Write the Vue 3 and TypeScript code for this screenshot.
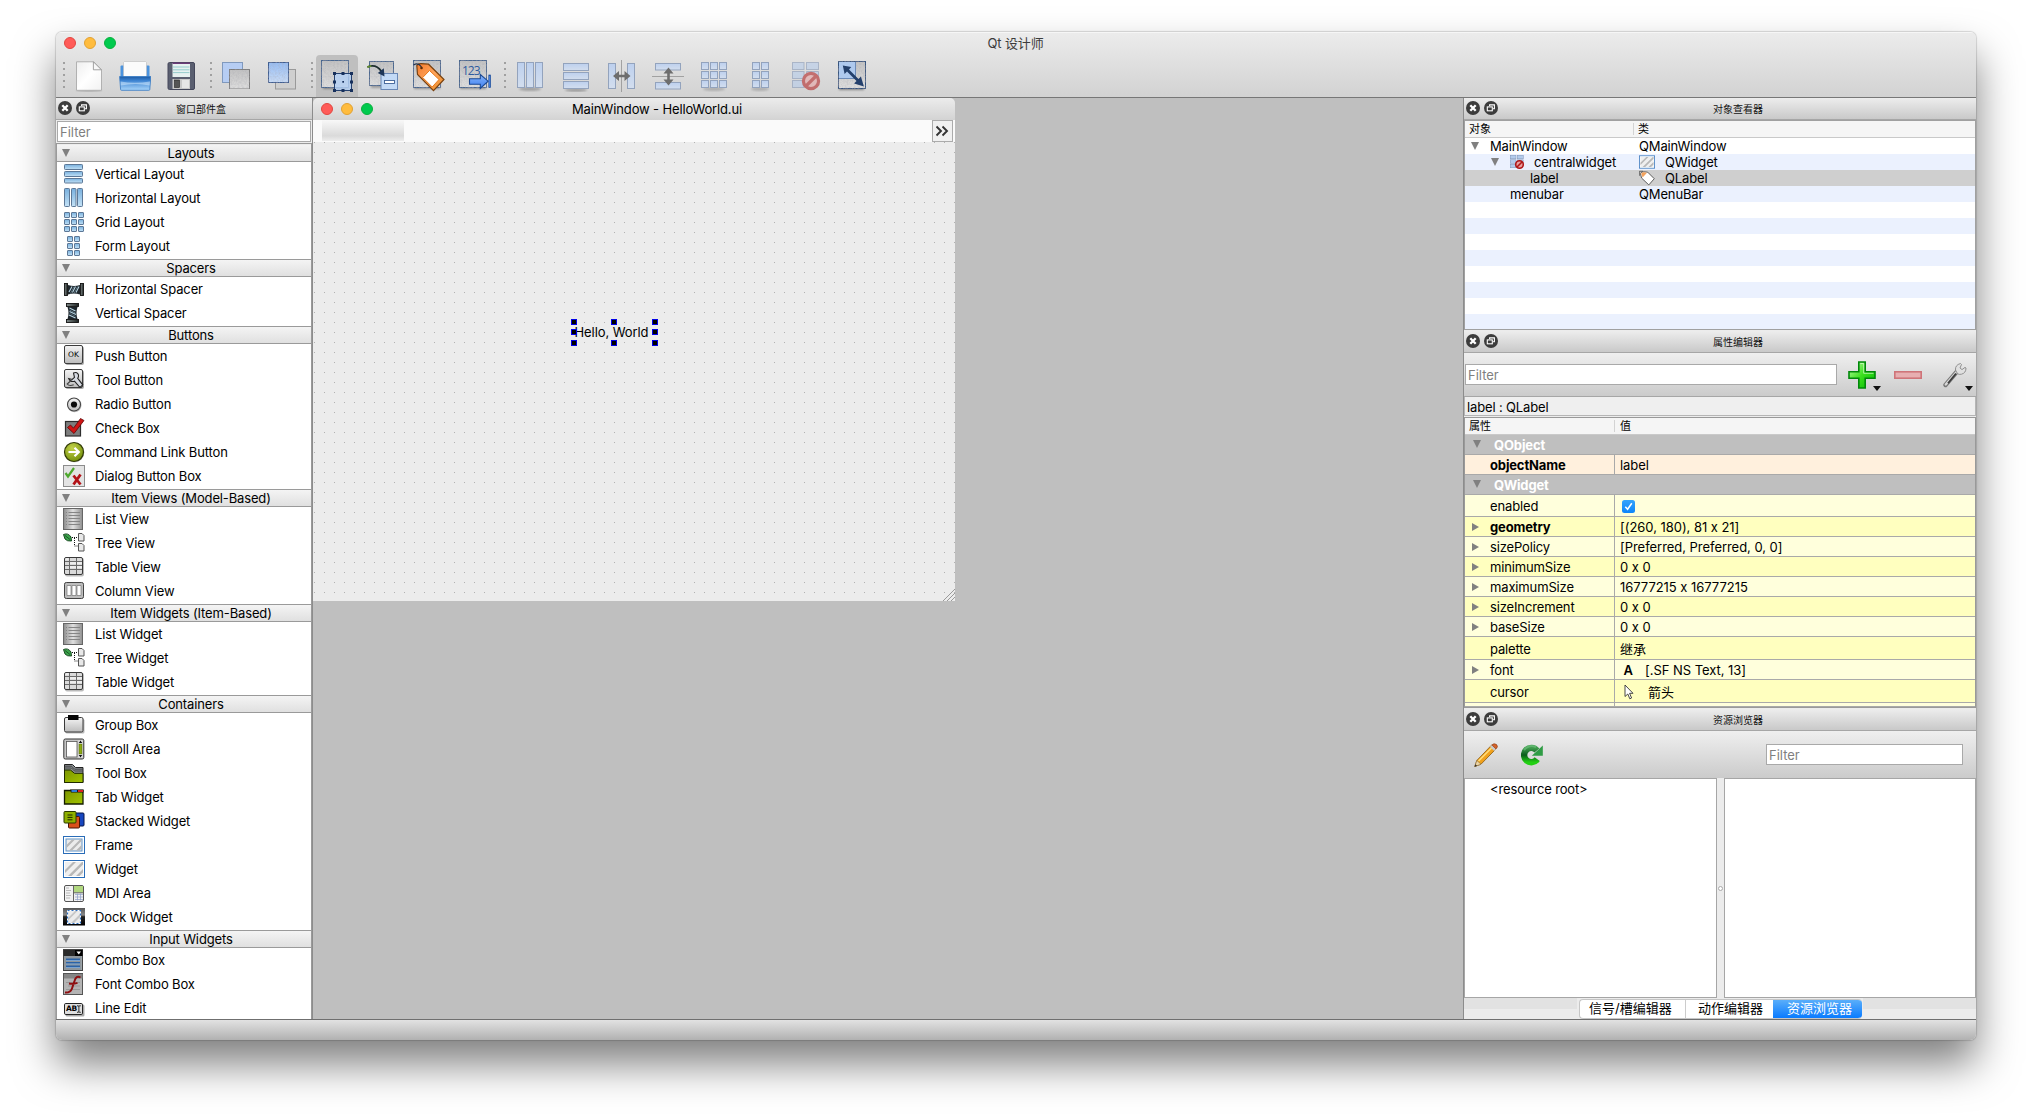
<script setup lang="ts">
interface Entry { name: string; icon: string; glyph?: string }
interface Category { title: string; items: Entry[] }
interface Tool { icon: string; active?: boolean; off?: boolean; glyph?: string }
interface Node { name: string; cls: string; pad: number; open?: boolean; icon?: string; clsIcon?: string; selected?: boolean }
interface Prop { name: string; value?: string; kind?: string; h: number; group?: boolean; bold?: boolean; arrow?: boolean; tone: string }

const e = (name: string, icon: string, glyph?: string): Entry => ({ name, icon, glyph })

const categories: Category[] = [
  { title: 'Layouts', items: [e('Vertical Layout', 'vlay'), e('Horizontal Layout', 'hlay'), e('Grid Layout', 'glay'), e('Form Layout', 'flay')] },
  { title: 'Spacers', items: [e('Horizontal Spacer', 'hspace'), e('Vertical Spacer', 'vspace')] },
  { title: 'Buttons', items: [e('Push Button', 'push', 'OK'), e('Tool Button', 'toolbtn'), e('Radio Button', 'radio'), e('Check Box', 'check'), e('Command Link Button', 'cmdlink'), e('Dialog Button Box', 'dlgbox')] },
  { title: 'Item Views (Model-Based)', items: [e('List View', 'list'), e('Tree View', 'tree'), e('Table View', 'table'), e('Column View', 'column')] },
  { title: 'Item Widgets (Item-Based)', items: [e('List Widget', 'list'), e('Tree Widget', 'tree'), e('Table Widget', 'table')] },
  { title: 'Containers', items: [e('Group Box', 'group'), e('Scroll Area', 'scroll'), e('Tool Box', 'toolbox'), e('Tab Widget', 'tab'), e('Stacked Widget', 'stack'), e('Frame', 'frame'), e('Widget', 'widget'), e('MDI Area', 'mdi'), e('Dock Widget', 'dock')] },
  { title: 'Input Widgets', items: [e('Combo Box', 'combo'), e('Font Combo Box', 'fontcombo'), e('Line Edit', 'lineedit', 'AB')] },
]

const toolGroups: Tool[][] = [
  [{ icon: 't-new' }, { icon: 't-open' }, { icon: 't-save' }],
  [{ icon: 't-lower' }, { icon: 't-raise' }],
  [{ icon: 't-edit', active: true }, { icon: 't-signal' }, { icon: 't-buddy' }, { icon: 't-taborder', glyph: '123' }],
  [{ icon: 't-h' }, { icon: 't-v' }, { icon: 't-hs' }, { icon: 't-vs' }, { icon: 't-grid' }, { icon: 't-form' }, { icon: 't-break', off: true }, { icon: 't-adjust' }],
]

const nodes: Node[] = [
  { name: 'MainWindow', cls: 'QMainWindow', pad: 6, open: true },
  { name: 'centralwidget', cls: 'QWidget', pad: 26, open: true, icon: 't-break', clsIcon: 'widget' },
  { name: 'label', cls: 'QLabel', pad: 65, clsIcon: 'tag', selected: true },
  { name: 'menubar', cls: 'QMenuBar', pad: 45 },
]
const blanks = 8

const props: Prop[] = [
  { name: 'QObject', h: 20, group: true, tone: 'grey' },
  { name: 'objectName', value: 'label', h: 20, bold: true, tone: 'peach' },
  { name: 'QWidget', h: 20, group: true, tone: 'grey' },
  { name: 'enabled', kind: 'check', h: 22, tone: 'light' },
  { name: 'geometry', value: '[(260, 180), 81 x 21]', h: 20, bold: true, arrow: true, tone: 'deep' },
  { name: 'sizePolicy', value: '[Preferred, Preferred, 0, 0]', h: 20, arrow: true, tone: 'light' },
  { name: 'minimumSize', value: '0 x 0', h: 20, arrow: true, tone: 'deep' },
  { name: 'maximumSize', value: '16777215 x 16777215', h: 20, arrow: true, tone: 'light' },
  { name: 'sizeIncrement', value: '0 x 0', h: 20, arrow: true, tone: 'deep' },
  { name: 'baseSize', value: '0 x 0', h: 20, arrow: true, tone: 'light' },
  { name: 'palette', value: '继承', h: 23, tone: 'deep' },
  { name: 'font', value: '[.SF NS Text, 13]', kind: 'font', h: 20, arrow: true, tone: 'light' },
  { name: 'cursor', value: '箭头', kind: 'cursor', h: 23, tone: 'deep' },
  { name: '', h: 4, tone: 'light' },
]
const three = [0, 1, 2]
</script>

<template>
  <svg class="sprites" aria-hidden="true">
    <defs>
      <linearGradient id="gBlue" x1="0" y1="0" x2="0" y2="1"><stop offset="0" stop-color="#78b0de" /><stop offset="1" stop-color="#c4e2f6" /></linearGradient>
      <linearGradient id="gPale" x1="0" y1="0" x2="0" y2="1"><stop offset="0" stop-color="#bdd0ee" /><stop offset="1" stop-color="#d3deee" /></linearGradient>
      <linearGradient id="gSky" x1="0" y1="0" x2="0" y2="1"><stop offset="0" stop-color="#96bdf3" /><stop offset="1" stop-color="#c9dcf7" /></linearGradient>
      <linearGradient id="gGrey" x1="0" y1="0" x2="0" y2="1"><stop offset="0" stop-color="#c2c2c2" /><stop offset="1" stop-color="#dedede" /></linearGradient>
      <linearGradient id="gBtn" x1="0" y1="0" x2="0" y2="1"><stop offset="0" stop-color="#f4f4f4" /><stop offset="1" stop-color="#bcbcbc" /></linearGradient>
      <linearGradient id="gDark" x1="0" y1="0" x2="1" y2="0"><stop offset="0" stop-color="#808a89" /><stop offset="1" stop-color="#1d2222" /></linearGradient>
      <linearGradient id="gDock" x1="0" y1="0" x2="0" y2="1"><stop offset="0" stop-color="#555" /><stop offset=".4" stop-color="#8a8a8a" /><stop offset=".5" stop-color="#222" /><stop offset="1" stop-color="#000" /></linearGradient>
      <linearGradient id="gTray" x1="0" y1="0" x2="0" y2="1"><stop offset="0" stop-color="#1c5aa4" /><stop offset=".3" stop-color="#3d84d2" /><stop offset="1" stop-color="#a9d6fa" /></linearGradient>
      <linearGradient id="gPaper" x1="0" y1="0" x2="1" y2="1"><stop offset="0" stop-color="#eee" /><stop offset=".5" stop-color="#fff" /><stop offset="1" stop-color="#f2f2f2" /></linearGradient>
      <linearGradient id="gArrow" x1="0" y1="0" x2="0" y2="1"><stop offset="0" stop-color="#86b5fb" /><stop offset="1" stop-color="#3e7ff0" /></linearGradient>
      <linearGradient id="gPlus" x1="0" y1="0" x2="1" y2="1"><stop offset="0" stop-color="#c9ffb0" /><stop offset=".5" stop-color="#3be01e" /><stop offset="1" stop-color="#00b800" /></linearGradient>
      <linearGradient id="gList" x1="0" y1="0" x2="1" y2="0"><stop offset="0" stop-color="#8c8c8c" /><stop offset=".5" stop-color="#e0e0e0" /><stop offset="1" stop-color="#8f8f8f" /></linearGradient>
      <linearGradient id="gTag" x1="0" y1="0" x2="1" y2="1"><stop offset="0" stop-color="#f47b2c" /><stop offset=".5" stop-color="#ffa55c" /><stop offset="1" stop-color="#e88a20" /></linearGradient>
      <linearGradient id="gRefresh" x1="0" y1="0" x2="0" y2="1"><stop offset="0" stop-color="#3f9c4d" /><stop offset=".5" stop-color="#0c5c1c" /><stop offset="1" stop-color="#22d012" /></linearGradient>
      <radialGradient id="gLime" cx=".4" cy=".3" r=".8"><stop offset="0" stop-color="#c3d24a" /><stop offset="1" stop-color="#6c8a04" /></radialGradient>
      <linearGradient id="gGreen" x1="0" y1="0" x2="1" y2="1"><stop offset="0" stop-color="#7d9600" /><stop offset="1" stop-color="#a2c400" /></linearGradient>
      <filter id="soft" x="-20%" y="-50%" width="140%" height="200%"><feGaussianBlur stdDeviation="1.2" /></filter>
      <filter id="grain" x="0" y="0" width="100%" height="100%">
        <feTurbulence type="fractalNoise" baseFrequency=".55" numOctaves="2" seed="4" result="n" />
        <feColorMatrix in="n" type="matrix" values="0 0 0 0 0.4  0 0 0 0 0.4  0 0 0 0 0.45  0 0 0 .8 -.28" result="d" />
        <feComposite in="d" in2="SourceGraphic" operator="in" result="c" />
        <feMerge><feMergeNode in="SourceGraphic" /><feMergeNode in="c" /></feMerge>
      </filter>
    </defs>

    <!-- dock title buttons -->
    <symbol id="d-close" viewBox="0 0 14 14"><circle cx="7" cy="7" r="7" fill="#3c3c3c" /><path d="M4.3 4.3l5.4 5.4M9.7 4.3l-5.4 5.4" stroke="#fff" stroke-width="2.3" /></symbol>
    <symbol id="d-float" viewBox="0 0 14 14"><circle cx="7" cy="7" r="7" fill="#3c3c3c" /><g fill="none" stroke="#fff" stroke-width="1.1"><path d="M5.6 5V3.9h4.8v3.9H9" /><rect x="3.3" y="5.9" width="5" height="3.9" /></g></symbol>

    <!-- toolbar -->
    <symbol id="t-new" viewBox="0 0 32 32"><ellipse cx="16" cy="31" rx="13" ry="1.2" fill="#0003" filter="url(#soft)" /><path d="M3.5 1.8h17.2l7.8 7.8v20.7h-25z" fill="url(#gPaper)" stroke="#aaa" stroke-width=".9" /><path d="M20.4 1.8v8h8z" fill="#f8f8f8" stroke="#999" stroke-width=".9" /></symbol>
    <symbol id="t-open" viewBox="0 0 32 32"><path d="M1.5 6.5q0-1 1-1h27q1 0 1 1v12h-29z" fill="#4b93de" /><path d="M4.5 2.5l1-1h21l1 1v15h-23z" fill="#fbfbfb" stroke="#bbb" stroke-width=".6" /><path d="M.6 16.5h31.2l-1 13q0 .8-1 .8H2.6q-1 0-1-.8z" fill="url(#gTray)" stroke="#3478c4" stroke-width=".8" /><path d="M1.5 21.5q14 2.5 29.5 0l-.3 4q-14-3-28.9 0z" fill="#d5edff88" /></symbol>
    <symbol id="t-save" viewBox="0 0 32 32"><rect x="3" y="2.500" width="26.500" height="27" rx="1.500" fill="#5a5f70" stroke="#44475a" /><rect x="7.500" y="3" width="17.500" height="14" fill="#e6f1f0" /><rect x="7.500" y="2.500" width="17.500" height="1.500" fill="#6b3b78" /><path d="M8 7h16.500M8 9.800h16.500M8 12.600h16.500" stroke="#8cc7c8" stroke-width=".9" /><rect x="7.500" y="19" width="17.500" height="10" fill="#c9c9c9" /><rect x="9.500" y="20" width="5" height="7.500" fill="#555" stroke="#222" stroke-width=".6" /><rect x="17" y="20" width="7" height="8" fill="#e6e6e6" /></symbol>
    <symbol id="t-lower" viewBox="0 0 32 32"><rect x="2.500" y="2.500" width="20" height="20" fill="#b6cdf3" stroke="#8099bd" /><rect x="9.500" y="9.500" width="20" height="19.500" fill="url(#gGrey)" stroke="#7c7c7c" filter="url(#grain)" /></symbol>
    <symbol id="t-raise" viewBox="0 0 32 32"><rect x="9.500" y="9.500" width="20" height="19.500" fill="#cfcfcf" stroke="#999" /><rect x="2.500" y="2.500" width="20" height="20" fill="url(#gSky)" stroke="#3d5e93" filter="url(#grain)" /></symbol>
    <symbol id="t-edit" viewBox="0 0 32 32"><rect x="2" y="24" width="24" height="5" fill="#0005" filter="url(#soft)" /><rect x=".5" y=".5" width="27" height="27" fill="url(#gGrey)" stroke="#4a678f" filter="url(#grain)" /><rect x="13.500" y="13.500" width="17" height="17" fill="#b3d0f5cc" stroke="#24406f" stroke-width="1" /><g fill="#17305c"><rect x="12" y="12" width="3" height="3" /><rect x="20.500" y="12" width="3" height="3" /><rect x="29" y="12" width="3" height="3" /><rect x="12" y="20.500" width="3" height="3" /><rect x="29" y="20.500" width="3" height="3" /><rect x="12" y="29" width="3" height="3" /><rect x="20.500" y="29" width="3" height="3" /><rect x="29" y="29" width="3" height="3" /><rect x="21.300" y="21" width="1.700" height="1.700" /></g></symbol>
    <symbol id="t-signal" viewBox="0 0 32 32"><rect x="4" y="23" width="20" height="5" fill="#0004" filter="url(#soft)" /><rect x="2.500" y="1.500" width="24" height="24" fill="url(#gGrey)" stroke="#4a678f" filter="url(#grain)" /><rect x="14" y="13.500" width="16.500" height="16" fill="#c3daf6" stroke="#6987b5" /><rect x="17.500" y="20.500" width="10" height="3" fill="#fff" stroke="#3d5f96" stroke-width=".9" /><path d="M.5 7Q9 3.500 14.500 11.500" fill="none" stroke="#1f2f30" stroke-width="1.800" /><path d="M.3 7.100l4-1.300" stroke="#5f8a30" stroke-width="1.900" /><path d="M17.500 16.500l-6.700-3.400 6-4.800z" fill="#1e3658" /></symbol>
    <symbol id="t-buddy" viewBox="0 0 32 32"><rect x="1" y="24" width="26" height="5" fill="#0005" filter="url(#soft)" /><rect x=".5" y=".5" width="27" height="27" fill="url(#gGrey)" stroke="#4a678f" filter="url(#grain)" /><path d="M3.800 5.500Q5 3.500 8 3.600l7.500.6L31 19.500 20.500 30.700 4.500 14.500z" fill="url(#gTag)" stroke="#7a4210" stroke-width="1.200" /><path d="M16.500 10.500l9.500 9-6.800 7.500-9.500-9.500z" fill="#fff" stroke="#e87a1c" stroke-width="1" /><path d="M.5 5Q5 2 8.500 7" fill="none" stroke="#23324c" stroke-width="1.200" /><circle cx="8.500" cy="8" r="1.300" fill="#5a2c08" /></symbol>
    <symbol id="t-taborder" viewBox="0 0 32 32"><rect x="1" y="24" width="26" height="5" fill="#0005" filter="url(#soft)" /><rect x=".5" y=".5" width="27" height="27" fill="url(#gGrey)" stroke="#4a678f" filter="url(#grain)" /><path d="M10.500 18.700h10.800v-4.200l7.800 6.700-7.800 7.300v-4.300H10.500z" fill="url(#gArrow)" stroke="#1d4a93" stroke-width="1.100" /><rect x="29.800" y="15" width="1.800" height="12.500" fill="#4a88ea" stroke="#1d4a93" stroke-width=".7" /></symbol>
    <symbol id="t-h" viewBox="0 0 32 32"><ellipse cx="16" cy="29" rx="11" ry="1.800" fill="#0004" filter="url(#soft)" /><g fill="url(#gPale)" stroke="#93a3bd"><rect x="3.500" y="2.500" width="7" height="25" /><rect x="12.500" y="2.500" width="7" height="25" /><rect x="21.500" y="2.500" width="7" height="25" /></g></symbol>
    <symbol id="t-v" viewBox="0 0 32 32"><ellipse cx="16" cy="30" rx="11" ry="1.800" fill="#0004" filter="url(#soft)" /><g fill="url(#gPale)" stroke="#93a3bd"><rect x="3.500" y="3.500" width="25" height="7" /><rect x="3.500" y="12.500" width="25" height="7" /><rect x="3.500" y="21.500" width="25" height="7" /></g></symbol>
    <symbol id="t-hs" viewBox="0 0 32 32"><g fill="url(#gPale)" stroke="#93a3bd"><rect x="2.500" y="3.500" width="7" height="25" /><rect x="21.500" y="3.500" width="7" height="25" /></g><path d="M15.500 0v32" stroke="#888" stroke-width=".7" /><path d="M7 16l6-5v3.700h5.500V11l6 5-6 5v-3.700H13V21z" fill="#6d6d6d" /></symbol>
    <symbol id="t-vs" viewBox="0 0 32 32"><g fill="url(#gPale)" stroke="#93a3bd"><rect x="3.500" y="3.500" width="25" height="6.500" /><rect x="3.500" y="22.500" width="25" height="6.500" /></g><path d="M0 16.500h32" stroke="#888" stroke-width=".7" /><path d="M16.500 7.500l5 6h-3.700v6h3.700l-5 6-5-6h3.700v-6h-3.700z" fill="#6d6d6d" /></symbol>
    <symbol id="t-grid" viewBox="0 0 32 32"><ellipse cx="16" cy="29" rx="11" ry="1.800" fill="#0003" filter="url(#soft)" /><g fill="url(#gPale)" stroke="#93a3bd"><template v-for="r in three" :key="r"><rect v-for="c in three" :key="c" :x="3.500 + c * 9" :y="2.500 + r * 9" width="7" height="7" /></template></g></symbol>
    <symbol id="t-form" viewBox="0 0 32 32"><ellipse cx="16" cy="29" rx="9" ry="1.800" fill="#0003" filter="url(#soft)" /><g fill="url(#gPale)" stroke="#93a3bd"><template v-for="r in three" :key="r"><rect x="8.500" :y="2.500 + r * 9" width="7" height="7" /><rect x="17.500" :y="2.500 + r * 9" width="7" height="7" /></template></g></symbol>
    <symbol id="t-break" viewBox="0 0 32 32"><g fill="#b3cbec" stroke="#7f93b5"><rect x="2.500" y="2.500" width="11.500" height="7" /><rect x="16.500" y="2.500" width="12" height="7" /><rect x="2.500" y="11.500" width="11.500" height="7" /><rect x="2.500" y="20.500" width="11.500" height="7" /><path d="M16.500 11.500h12v7h-12z" /></g><circle cx="21" cy="21" r="7.600" fill="#e8a0a0" stroke="#b01818" stroke-width="3.200" /><path d="M16 26L26 16" stroke="#b01818" stroke-width="3.200" /></symbol>
    <symbol id="t-adjust" viewBox="0 0 32 32"><rect x="3" y="26" width="25" height="4" fill="#0006" filter="url(#soft)" /><rect x="2.500" y="1.500" width="27" height="27" fill="url(#gGrey)" stroke="#34547f" filter="url(#grain)" /><path d="M3 2h16.500v16H3z" fill="#aec9ee" /><path d="M19.500 2v16M3 18.500h16.500" stroke="#6c8bb8" fill="none" /><path d="M6.800 5.500l8.500 1.600-2.300 2.300 9.500 9.500 2.400-2.400 3 9.900-9.800-2.900 2.400-2.400-9.500-9.500-2.400 2.400z" fill="#24406c" /></symbol>

    <!-- widget box -->
    <symbol id="vlay" viewBox="0 0 22 22"><g fill="url(#gBlue)" stroke="#5d7897"><rect x="1.500" y="1.500" width="18" height="5" rx=".8" /><rect x="1.500" y="8.500" width="18" height="5" rx=".8" /><rect x="1.500" y="15.500" width="18" height="4.500" rx=".8" /></g></symbol>
    <symbol id="hlay" viewBox="0 0 22 22"><g fill="url(#gBlue)" stroke="#5d7897"><rect x="1.500" y="1.500" width="5" height="18" rx=".8" /><rect x="8.500" y="1.500" width="4.500" height="18" rx=".8" /><rect x="14.500" y="1.500" width="5" height="18" rx=".8" /></g></symbol>
    <symbol id="glay" viewBox="0 0 22 22"><g fill="url(#gBlue)" stroke="#5d7897"><template v-for="r in three" :key="r"><rect v-for="c in three" :key="c" :x="1.500 + c * 7" :y="1.500 + r * 7" width="5" height="5" rx=".4" /></template></g></symbol>
    <symbol id="flay" viewBox="0 0 22 22"><g fill="url(#gBlue)" stroke="#5d7897"><template v-for="r in three" :key="r"><rect x="4.500" :y="1.500 + r * 7" width="5" height="5" rx=".4" /><rect x="11.500" :y="1.500 + r * 7" width="5" height="5" rx=".4" /></template></g></symbol>
    <symbol id="hspace" viewBox="0 0 22 22"><rect x="1.500" y="5.500" width="3" height="12" fill="url(#gDark)" stroke="#111" stroke-width=".9" /><rect x="17.500" y="5.500" width="3" height="12" fill="url(#gDark)" stroke="#111" stroke-width=".9" /><path d="M5 7q6 2 12 0v9.500q-6-2-12 0z" fill="#1d252b" /><path d="M6 14l3-5.500M9.500 14.500l3-6M13 14.500l3-6" stroke="#b7d4e2" stroke-width="1.100" /><path d="M7.500 15.500l3.500-7M11 15.500l3.500-7" stroke="#6d8a99" stroke-width=".7" /></symbol>
    <symbol id="vspace" viewBox="0 0 22 22"><rect x="3.500" y="1.500" width="12" height="3" fill="url(#gDark)" stroke="#111" stroke-width=".9" /><rect x="3.500" y="17.500" width="12" height="3" fill="url(#gDark)" stroke="#111" stroke-width=".9" /><path d="M4.500 5h10q-2 6 0 12h-10q2-6 0-12z" fill="#1d252b" /><path d="M6.500 6l6 3M6.500 9.500l6.500 3M6 13l6.500 3" stroke="#b7d4e2" stroke-width="1.100" /><path d="M6.500 8l6 3M6.500 11.300l6 3" stroke="#6d8a99" stroke-width=".7" /></symbol>
    <symbol id="push" viewBox="0 0 22 22"><rect x="2.500" y="1.500" width="18.500" height="18.500" rx="2" fill="#0005" /><rect x="1.500" y=".5" width="18" height="18" rx="1.500" fill="url(#gBtn)" stroke="#3c3c3c" /></symbol>
    <symbol id="toolbtn" viewBox="0 0 22 22"><rect x="2.500" y="1.500" width="18.500" height="18.500" rx="2" fill="#0005" /><rect x="1.500" y=".5" width="18" height="18" rx="1.500" fill="url(#gBtn)" stroke="#3c3c3c" /><path d="M10.500 4q4-1.500 5 2 .3 2-.8 3.300l5 6.500-2.700 2.700-5.500-6.300q-4 1.300-5.800-2.700l3.500 1 2.300-2.200z" fill="#d5d9e0" stroke="#222" stroke-width="1.100" /><path d="M8 11.500l-3.800 3.500q2 2.500 6.500.8" fill="none" stroke="#444" stroke-width="1.200" /></symbol>
    <symbol id="radio" viewBox="0 0 22 22"><circle cx="11.500" cy="12.300" r="7" fill="#0004" /><circle cx="11" cy="11.500" r="6.500" fill="url(#gBtn)" stroke="#444" stroke-width="1.100" /><circle cx="11" cy="11.500" r="3.100" fill="#0a0a0a" /></symbol>
    <symbol id="check" viewBox="0 0 22 22"><rect x="2.500" y="4.500" width="15" height="14.500" fill="#7d7d7d" stroke="#2d2d2d" stroke-width="1.200" /><path d="M4.500 10.500l3-2.500 3 3.200L17.500 1.500l3.500 2L11 16.500z" fill="#d01515" stroke="#5d0505" stroke-width=".8" /></symbol>
    <symbol id="cmdlink" viewBox="0 0 22 22"><circle cx="11.500" cy="11.500" r="9.800" fill="#0004" /><circle cx="11" cy="11" r="9.500" fill="url(#gLime)" stroke="#333b08" stroke-width="1.200" /><path d="M5.500 11h9.500M11.500 6.800l4.300 4.200-4.300 4.200" fill="none" stroke="#fff" stroke-width="2.200" /></symbol>
    <symbol id="dlgbox" viewBox="0 0 22 22"><rect x=".5" y=".5" width="21" height="21" fill="#e3e3e3" stroke="#8c8c8c" /><path d="M2.500 8l2.500 3.500L11 3" fill="none" stroke="#4da82d" stroke-width="2.200" /><path d="M10.500 10.500l7 9M17.500 9.500l-7 10" stroke="#b31217" stroke-width="2.800" /></symbol>
    <symbol id="list" viewBox="0 0 22 22"><rect x=".5" y=".5" width="19" height="21" fill="url(#gList)" stroke="#666" /><path d="M3 4.500h1M5.500 4.500h11.500M3 7.500h1M5.500 7.500h11.500M3 10.500h1M5.500 10.500h11.500M3 13.500h1M5.500 13.500h11.500M3 16.500h1M5.500 16.500h11.500" stroke="#858585" stroke-width="1" /></symbol>
    <symbol id="tree" viewBox="0 0 22 22"><path d="M.5 2.500Q5 .5 8 5l.5 4Q4 9.500 2 7z" fill="#3ba34b" stroke="#0d3d16" stroke-width=".9" /><path d="M2 3.500l5 4" stroke="#0d3d16" stroke-width=".7" /><path d="M9 5.500h5M11.500 6v8h3" fill="none" stroke="#111" stroke-width="1" stroke-dasharray="1 1" /><g fill="#e8e8e8" stroke="#555"><path d="M15.500 1.500h3.500l2 2v5.500h-5.500zM15.500 11.500h3.500l2 2v5.500h-5.500z" /></g></symbol>
    <symbol id="table" viewBox="0 0 22 22"><rect x="2" y="2" width="19" height="18.500" rx="2" fill="#0004" /><rect x="1.500" y="1.500" width="18" height="17" rx="1.500" fill="#dadada" stroke="#3a3a3a" /><path d="M2 5.500h17M2 9.500h17M2 13.500h17M6.500 2v16M13.500 2v16" stroke="#6a6a6a" stroke-width="1" /><path d="M7 7h6M14 7h5M7 11h6M14 11h5M2.500 3h3" stroke="#fff" stroke-width="1" /></symbol>
    <symbol id="column" viewBox="0 0 22 22"><rect x="1.500" y="2.500" width="19" height="16" rx="1.800" fill="#bdbdbd" stroke="#444" /><path d="M4 5.500h4v10H4zM9 5.500h4v10H9zM14 5.500h4v10h-4z" fill="#fff" stroke="#777" stroke-width=".7" /></symbol>
    <symbol id="group" viewBox="0 0 22 22"><rect x="2.500" y="5" width="19" height="14.500" rx="1.500" fill="#0004" /><rect x="1.500" y="3.500" width="18.500" height="14.500" rx="1.500" fill="url(#gBtn)" stroke="#3a3a3a" /><rect x="5" y="1" width="10.500" height="5" fill="#050505" /></symbol>
    <symbol id="scroll" viewBox="0 0 22 22"><rect x=".8" y="1" width="20" height="20" rx="1.500" fill="#c6c6c6" stroke="#333" /><rect x="3.500" y="3.500" width="10.500" height="15.500" fill="#fff" stroke="#555" stroke-width=".8" /><rect x="15.500" y="2.500" width="4" height="17" fill="#efefef" /><rect x="16" y="6" width="3" height="10" fill="#8cab10" stroke="#4c5c08" stroke-width=".5" /><path d="M15.700 5l1.800-2.500L19.300 5zM15.700 17l1.800 2.500 1.800-2.500z" fill="#111" /></symbol>
    <symbol id="toolbox" viewBox="0 0 22 22"><path d="M1.500 2.500h8l3 3h7.500v15H1.500z" fill="#8a8f92" stroke="#222" /><path d="M1.500 6h7l3 3h8.500M1.500 4.200h7l3 3h8.500" fill="none" stroke="#333" stroke-width=".8" /><path d="M1.500 8h6l4 3.300h8.500v9.200H1.500z" fill="url(#gGreen)" stroke="#1f2a00" /></symbol>
    <symbol id="tab" viewBox="0 0 22 22"><path d="M1.500 4.500h18.500v13.500H1.500z" fill="url(#gGreen)" stroke="#141c00" stroke-width="1.300" /><path d="M7 3.500h13.500v3H8z" fill="#141414" /><rect x="8.500" y="4" width="5.500" height="2" fill="#2d7bd8" /><rect x="15" y="4" width="5" height="2" fill="#d82020" /></symbol>
    <symbol id="stack" viewBox="0 0 22 22"><rect x="9.500" y="3" width="11.500" height="13" rx="1" fill="#1746c0" stroke="#061448" /><rect x="5.500" y="6.500" width="11" height="11.500" rx="1" fill="#d9501a" stroke="#4a1404" /><rect x="1" y="1.500" width="12" height="11.500" rx="1" fill="#8fb000" stroke="#2c3a00" /><path d="M4.500 5h5M4.500 7.400h5M4.500 9.800h5" stroke="#202a00" stroke-width="1" /></symbol>
    <symbol id="frame" viewBox="0 0 22 22"><rect x=".5" y="2.500" width="21" height="17" fill="#fff" stroke="#2a6db8" /><rect x="3" y="5" width="16" height="12" fill="#ececec" stroke="#5f93c8" /><path d="M3.500 11l5.500-5.500h3L3.500 14zM6 16.500l11-11h1.500v1.500L9 16.500zM13 16.500l5.500-5.500v3.500l-2 2z" fill="#b8b8b8" /></symbol>
    <symbol id="widget" viewBox="0 0 22 22"><rect x=".5" y="2.500" width="21" height="17" fill="#fff" stroke="#2a6db8" /><rect x="2" y="4" width="18" height="14" fill="#efefef" /><path d="M2 12l8-8h3L2 15zM5 18L19 4h1v2.500L8.500 18zM13 18l7-7v3.500L16.500 18z" fill="#b8b8b8" /></symbol>
    <symbol id="mdi" viewBox="0 0 22 22"><rect x="1.500" y="3.500" width="19" height="16" rx="1.500" fill="#f2f2f2" stroke="#555" /><path d="M3 6h3M3 8.500h5M3 11h4M3 13.500h5M3 16h4" stroke="#aaa" stroke-width=".8" /><rect x="11" y="4" width="9" height="6.500" fill="#b1d880" /><path d="M10.500 4v15M10.500 10.800h10" stroke="#555" stroke-width=".9" /><path d="M12 12.500h8M12 15h8M12 17.500h8M14.500 11.500v7M17.500 11.500v7" stroke="#8f9fc8" stroke-width=".7" /></symbol>
    <symbol id="dock" viewBox="0 0 22 22"><rect y="2" width="22" height="17.500" fill="url(#gDock)" /><rect x="4.500" y="4.500" width="13" height="13" fill="#ececec" stroke="#fff" /><path d="M5 12l7-7h2.500L5 14.500zM8 17l9-9v3l-6 6z" fill="#c6c6c6" /><rect x="4.500" y="4.500" width="13" height="13" fill="none" stroke="#2d6fc0" stroke-width="1.200" stroke-dasharray="2 2" /></symbol>
    <symbol id="combo" viewBox="0 0 22 22"><rect x=".5" y=".5" width="19" height="21" fill="#a9b0b5" stroke="#444" /><rect x=".5" y="1" width="19" height="6" fill="#2a2a2a" /><rect x="12" y="1" width="7.500" height="6" fill="#000" /><path d="M13.500 2.500h4.500l-2.200 3z" fill="#fff" /><rect x="1" y="7" width="17.500" height="14" fill="#8e969c" /><path d="M3 10.300h14M3 13.800h14M3 17.300h14" stroke="#2b62a6" stroke-width="1.400" /><path d="M3 11.500h14M3 15h14M3 18.500h14" stroke="#76a6dc" stroke-width=".8" /></symbol>
    <symbol id="fontcombo" viewBox="0 0 22 22"><rect x=".5" y=".5" width="19" height="21" fill="#b4b4b4" stroke="#555" /><rect x="1" y="1" width="18.500" height="4.500" fill="#858585" /><path d="M3 9.500h14M5 13h12M3 16.500h14" stroke="#989898" stroke-width="1.200" /><path d="M17.500 4.500Q13 2 11.500 8L9 15.500Q7.500 20 2 19.500M6 10.500q4 .8 8.500-.6" fill="none" stroke="#8e0e10" stroke-width="2" /></symbol>
    <symbol id="lineedit" viewBox="0 0 22 22"><rect x="2.500" y="7.500" width="19" height="12" rx="1.500" fill="#0005" /><rect x="1.500" y="6.500" width="18" height="11" rx="1.300" fill="#dedede" stroke="#222" /><path d="M14 8.800h1.300l.6.500.6-.5h1.300M15.900 9v6M14 15.300h1.300l.6-.5.6.5h1.300" fill="none" stroke="#000" stroke-width=".8" /></symbol>
    <symbol id="tag" viewBox="0 0 22 22"><path d="M2 5Q3 2 7 2.500l5 .5 9 9-7.500 8.500L3.500 11z" fill="#fff" stroke="#555" stroke-width="1.300" /><path d="M3 5Q4 3 7 3.200l4 .5-6 6.500z" fill="#f2a35e" /><path d="M.5 8V1.800h5" fill="none" stroke="#444" stroke-width="1" /></symbol>

    <!-- editors -->
    <symbol id="plus" viewBox="0 0 28 28"><path d="M10.800 1h6.400v9.800H27v6.400h-9.800V27h-6.400v-9.800H1v-6.400h9.800z" fill="url(#gPlus)" stroke="#00880a" stroke-width="1.600" /><path d="M12.300 2.500h3.400v9.800h9.800" fill="none" stroke="#e0ffd5aa" stroke-width="1" /></symbol>
    <symbol id="minus" viewBox="0 0 28 28"><rect x=".8" y="10.800" width="26.400" height="6.400" fill="#e7aeb0" stroke="#cf7479" stroke-width="1.600" /></symbol>
    <symbol id="wrench" viewBox="0 0 24 26"><path d="M2.500 23L14 9.500" stroke="#777" stroke-width="4.400" stroke-linecap="round" /><path d="M2.700 22.500L13.500 10" stroke="#d9d9d9" stroke-width="2.200" stroke-linecap="round" /><path d="M5 21.200L13 11.500" stroke="#3c3c3c" stroke-width="1.800" /><path d="M12.500 8Q12 3 17.500 1.500l1 1-1.500 3.500 2 1.600 3-2.200 1 .6Q23 11 18.500 12.200q-2.500.6-4-.5z" fill="#e0e0e0" stroke="#888" stroke-width=".9" /></symbol>
    <symbol id="pencil" viewBox="0 0 24 24"><path d="M.8 23.500l2-6L17.500 2.200l4.200 4L7 21.200z" fill="#f0a11c" stroke="#8a5a10" stroke-width=".8" /><path d="M4.500 18L18 4.500" stroke="#ffdc7a" stroke-width="1.600" /><path d="M.8 23.500l2-6 4.200 3.700z" fill="#edd5a5" stroke="#8a7040" stroke-width=".6" /><path d="M.6 23.700l.8-2.500 1.700 1.500z" fill="#333" /><path d="M16 3.800l1.800-1.900 4.200 4-1.800 2z" fill="#c9c9c9" /><path d="M17.800 1.900Q20-.3 22.500 1.500q2.200 2.200-.5 4.500z" fill="#d4622a" stroke="#8a3a14" stroke-width=".6" /></symbol>
    <symbol id="refresh" viewBox="0 0 22 22"><path d="M16.200 15.200a7.200 7.200 0 1 1-.3-8.700" fill="none" stroke="url(#gRefresh)" stroke-width="6.400" /><path d="M21.800 1.500v10.300h-11l3.800-3.600z" fill="#2f9c45" /><path d="M3 6Q8 0 15 3" stroke="#7cc98a88" stroke-width="2" fill="none" /></symbol>
    <symbol id="pointer" viewBox="0 0 10 16"><path d="M1 1v11.500l2.800-2.500 2 4.800 1.800-.8-2-4.700H9z" fill="#fff" stroke="#333" stroke-width=".9" /></symbol>
  </svg>

  <div class="desk">
    <div class="window">
      <header class="head">
        <div class="titlebar">
          <span class="lights"><i class="r" /><i class="y" /><i class="g" /></span>
          <span class="wtitle">Qt 设计师</span>
        </div>
        <div class="toolbar">
          <template v-for="(group, gi) in toolGroups" :key="gi">
            <span class="handle"><i v-for="n in 5" :key="n" /></span>
            <div class="tools">
              <span v-for="t in group" :key="t.icon" class="tool" :class="{ active: t.active, off: t.off }">
                <svg width="32" height="32"><use :href="'#' + t.icon" /></svg>
                <em v-if="t.glyph" class="digits">{{ t.glyph }}</em>
              </span>
            </div>
          </template>
        </div>
      </header>

      <main class="body">
        <aside class="left">
          <div class="dockhead lefthead">
            <svg width="14" height="14"><use href="#d-close" /></svg><svg width="14" height="14"><use href="#d-float" /></svg>
            <span>窗口部件盒</span>
          </div>
          <div class="boxfilter"><div class="field">Filter</div></div>
          <div class="tree">
            <section v-for="cat in categories" :key="cat.title">
              <div class="cat"><i class="down" /><span>{{ cat.title }}</span></div>
              <div v-for="it in cat.items" :key="it.name" class="item">
                <span class="pic"><svg width="22" height="22"><use :href="'#' + it.icon" /></svg><em v-if="it.glyph" :class="it.icon">{{ it.glyph }}</em></span>
                <span>{{ it.name }}</span>
              </div>
            </section>
          </div>
        </aside>

        <div class="canvas">
          <div class="form">
            <div class="formtitle">
              <span class="lights"><i class="r" /><i class="y" /><i class="g" /></span>
              <span class="ftext">MainWindow - HelloWorld.ui</span>
            </div>
            <div class="menubar"><span class="stub" /><span class="more"><svg width="15" height="12" viewBox="0 0 15 12"><path d="M1.500 1.500L6 6l-4.500 4.500M7.500 1.500L12 6l-4.500 4.500" fill="none" stroke="#333" stroke-width="1.900" /></svg></span></div>
            <div class="surface">
              <div class="hello">Hello, World
                <b class="h1" /><b class="h2" /><b class="h3" /><b class="h4" /><b class="h5" /><b class="h6" /><b class="h7" /><b class="h8" />
              </div>
              <svg class="grip" width="12" height="12"><path d="M0 12L12 0M4 12l8-8M8 12l4-4" stroke="#9a9a9a" stroke-width="1" /></svg>
            </div>
          </div>
        </div>

        <aside class="right">
          <div class="dockhead">
            <svg width="14" height="14"><use href="#d-close" /></svg><svg width="14" height="14"><use href="#d-float" /></svg>
            <span>对象查看器</span>
          </div>
          <div class="objects">
            <div class="colhead"><span class="c1">对象</span><span>类</span></div>
            <div v-for="n in nodes" :key="n.name" class="node" :class="{ selected: n.selected }">
              <span class="nname" :style="{ paddingLeft: n.pad + 'px' }">
                <i v-if="n.open" class="down" />
                <svg v-if="n.icon" class="nicon" width="16" height="16"><use :href="'#' + n.icon" /></svg>
                <span>{{ n.name }}</span>
              </span>
              <span class="ncls"><svg v-if="n.clsIcon" width="16" height="16"><use :href="'#' + n.clsIcon" /></svg>{{ n.cls }}</span>
            </div>
            <div v-for="b in blanks" :key="b" class="node" />
          </div>

          <div class="dockhead">
            <svg width="14" height="14"><use href="#d-close" /></svg><svg width="14" height="14"><use href="#d-float" /></svg>
            <span>属性编辑器</span>
          </div>
          <div class="propbar">
            <div class="field pf">Filter</div>
            <span class="pbtn"><svg width="28" height="28"><use href="#plus" /></svg><i class="drop" /></span>
            <svg class="minus" width="28" height="28"><use href="#minus" /></svg>
            <span class="pbtn wr"><svg width="24" height="26"><use href="#wrench" /></svg><i class="drop" /></span>
          </div>
          <div class="subject">label : QLabel</div>
          <div class="props">
            <div class="colhead ph"><span class="c1">属性</span><span>值</span></div>
            <div v-for="(p, i) in props" :key="i" class="prop" :class="[p.tone, { group: p.group }]" :style="{ height: p.h + 'px' }">
              <span class="pname" :class="{ bold: p.bold }"><i v-if="p.group" class="down" /><i v-if="p.arrow" class="side" />{{ p.name }}</span>
              <span v-if="!p.group" class="pval">
                <span v-if="p.kind === 'check'" class="cb"><svg width="13" height="13" viewBox="0 0 13 13"><path d="M3.300 6.800l2.300 2.500 4.200-6" fill="none" stroke="#fff" stroke-width="1.500" /></svg></span>
                <span v-if="p.kind === 'font'" class="fa">A</span>
                <svg v-if="p.kind === 'cursor'" class="ptr" width="10" height="16"><use href="#pointer" /></svg>
                <span>{{ p.value }}</span>
              </span>
            </div>
          </div>

          <div class="dockhead">
            <svg width="14" height="14"><use href="#d-close" /></svg><svg width="14" height="14"><use href="#d-float" /></svg>
            <span>资源浏览器</span>
          </div>
          <div class="resbar">
            <svg width="24" height="24"><use href="#pencil" /></svg>
            <svg width="22" height="22"><use href="#refresh" /></svg>
            <div class="field rf">Filter</div>
          </div>
          <div class="resources">
            <div class="pane">&lt;resource root&gt;</div>
            <div class="split"><i /></div>
            <div class="pane" />
          </div>
          <div class="tabs">
            <span class="strip" />
            <div class="tabset"><span class="t1">信号/槽编辑器</span><span class="t2">动作编辑器</span><span class="t3">资源浏览器</span></div>
            <span class="strip" />
          </div>
        </aside>
      </main>
      <footer class="status" />
    </div>
  </div>
</template>

<style>
body { background: #fff; overflow: hidden; }
</style>

<style scoped>
.sprites { position: absolute; width: 0; height: 0; }
.desk, .desk * { box-sizing: border-box; }
.desk {
  width: 2032px; height: 1120px; padding: 32px 56px 0; overflow: hidden; background: #fff;
  font: 13px/16px Inter, "Noto Sans CJK SC", sans-serif; letter-spacing: -.14px; color: #000; white-space: nowrap;
}
svg { display: block; flex: none; }
.window {
  width: 1920px; height: 1008px; display: flex; flex-direction: column; border-radius: 6px; overflow: hidden; background: #ececec;
  box-shadow: 0 0 1px 1px rgba(0, 0, 0, .14), 0 24px 42px rgba(0, 0, 0, .5);
}
.head { height: 66px; flex: none; background: linear-gradient(#ececec, #d2d2d2); border-bottom: 1px solid #777; box-shadow: inset 0 1px #f6f6f6; }
.titlebar { height: 22px; position: relative; display: flex; justify-content: center; align-items: center; color: #3c3c3c; }
.lights { position: absolute; left: 8px; top: 5px; display: flex; gap: 8px; }
.lights i { width: 12px; height: 12px; border-radius: 50%; }
.r { background: #ff5b58; border: 1px solid #e2463f; }
.y { background: #ffbc3e; border: 1px solid #e1a132; }
.g { background: #00ca4e; border: 1px solid #09b03d; }
.wtitle { padding: 0 1px 1px 0; }
.toolbar { display: flex; height: 43px; padding: 6px 0 0 7px; }
.tools { display: flex; gap: 14px; margin: 0 13px 0 8px; height: 32px; }
.handle { width: 2px; padding-top: 2px; display: flex; flex-direction: column; gap: 4px; }
.handle i { width: 2px; height: 2px; background: #a0a0a0; }
.tool { position: relative; }
.tool.active { background: #bfbfbf; padding: 5px; margin: -5px; height: 42px; border-radius: 4px 4px 0 0; }
.tool.off { opacity: .55; }
em { position: absolute; font-style: normal; }
.digits { left: 3px; top: 4px; font: 500 12px/14px "Open Sans", sans-serif; letter-spacing: -1px; color: #2f5c9f; }
.push { left: 4px; top: 5px; width: 13px; text-align: center; font: 7.500px/9px "DejaVu Sans", sans-serif; letter-spacing: 0; }
.lineedit { left: 3px; top: 7px; font: bold 7.500px/10px "DejaVu Sans", sans-serif; letter-spacing: -.4px; }

.body { flex: 1; display: flex; min-height: 0; }
.dockhead { height: 22px; flex: none; display: flex; align-items: center; gap: 4px; padding: 0 2px 2px; background: linear-gradient(#ededed, #c9c9c9); border-bottom: 1px solid #a6a6a6; font-size: 10px; letter-spacing: 0; color: #111; }
.dockhead span { flex: 1; text-align: center; padding: 2px 0 0; line-height: 14px; }
.dockhead.lefthead span { padding-right: 2px; }
.left { width: 257px; flex: none; display: flex; flex-direction: column; border-right: 1px solid #8c8c8c; overflow: hidden; }
.boxfilter { height: 23px; padding: 1px 1px 1px 1px; background: #ececec; flex: none; }
.field { background: #fff; border: 1px solid #a9a9a9; color: #7f7f7f; line-height: 19px; padding: 1px 2px 0; height: 21px; letter-spacing: 0; }
.tree { flex: 1; overflow: hidden; border: 1px solid #9a9a9a; border-bottom-width: 0; background: #fff; }
section { padding-bottom: 1px; }
.cat { height: 18px; position: relative; display: flex; align-items: center; justify-content: center; background: linear-gradient(#f4f4f4, #e0e0e0); border-top: 1px solid #9a9a9a; border-bottom: 1px solid #9a9a9a; padding-left: 14px; }
section:first-child .cat { border-top-color: #ededed; }
.down { width: 0; height: 0; border: 4.500px solid transparent; border-top: 8px solid #808080; border-bottom: 0; flex: none; }
.side { width: 0; height: 0; border: 4px solid transparent; border-left: 7px solid #808080; border-right: 0; flex: none; }
.cat .down { position: absolute; left: 5px; top: 4px; }
.item { height: 24px; display: flex; align-items: center; gap: 10px; padding-left: 6px; }
.pic { position: relative; width: 22px; height: 22px; }

.canvas { flex: 1; background: #bfbfbf; }
.form { width: 642px; height: 503px; display: flex; flex-direction: column; }
.formtitle { height: 22px; position: relative; border-radius: 5px 5px 0 0; background: linear-gradient(#ececec, #d3d3d3); display: flex; justify-content: center; align-items: center; padding-left: 46px; }
.menubar { height: 22px; background: #fafafa; display: flex; justify-content: space-between; padding: 0 2px 0 9px; }
.stub { width: 82px; height: 21px; background: linear-gradient(#f8f8f8, #dadada 75%, #ededed); }
.more { width: 21px; height: 22px; border: 1px solid #ababab; background: #f0f0f0; display: flex; align-items: center; justify-content: center; }
.surface { flex: 1; position: relative; background: conic-gradient(from 90deg at 9px 9px, #b2b2b2 90deg, #ececec 0) -8px -9px / 10px 10px; }
.hello { position: absolute; left: 261px; top: 180px; width: 81px; height: 21px; line-height: 21px; padding-left: .5px; letter-spacing: -.08px; }
.hello b { position: absolute; width: 6px; height: 6px; background: #000; border: 1px solid #0000e6; }
.h1 { left: -3px; top: -3px; } .h2 { left: 37px; top: -3px; } .h3 { left: 78px; top: -3px; }
.h4 { left: -3px; top: 7px; } .h5 { left: 78px; top: 7px; }
.h6 { left: -3px; top: 18px; } .h7 { left: 37px; top: 18px; } .h8 { left: 78px; top: 18px; }
.grip { position: absolute; right: 0; bottom: 0; }

.right { width: 513px; flex: none; display: flex; flex-direction: column; border-left: 1px solid #8c8c8c; }
.colhead { height: 17px; background: #f5f5f5; border-bottom: 1px solid #c9c9c9; display: flex; align-items: center; font-size: 11px; letter-spacing: 0; padding: 0 0 1px 4px; }
.colhead .c1 { width: 165px; height: 12px; line-height: 12px; border-right: 1px solid #d3d3d3; margin-right: 4px; }
.ph .c1 { width: 146px; margin-right: 5px; }
.objects { height: 210px; border: 1px solid #a0a0a0; overflow: hidden; background: #fff; margin-bottom: 1px; flex: none; }
.node { height: 16px; display: flex; align-items: center; }
.node:nth-child(odd) { background: #ebf1fe; }
.node.selected { background: #cfcfcf; }
.nname { width: 174px; display: flex; align-items: center; }
.nname .down { margin-right: 11px; }
.nicon { margin: 0 9px 0 -1px; }
.ncls { display: flex; align-items: center; gap: 10px; }
.propbar { height: 44px; flex: none; display: flex; align-items: flex-start; background: linear-gradient(#efefef, #cbcbcb); border-bottom: 1px solid #a6a6a6; padding: 8px 0 0 1px; }
.pf { width: 372px; margin-top: 3px; }
.pbtn { position: relative; margin-left: 11px; }
.minus { margin-left: 18px; }
.pbtn.wr { margin: 1px 0 0 21px; }
.drop { position: absolute; right: -5px; bottom: -2px; border: 4px solid transparent; border-top: 5px solid #111; border-bottom: 0; }
.pbtn.wr .drop { right: -6px; bottom: -3px; }
.subject { height: 19px; margin-bottom: 1px; line-height: 18px; padding: 1px 0 0 2px; flex: none; border: 1px solid #b5b5b5; border-top: 0; background: #efefef; }
.props { height: 291px; flex: none; border: 1px solid #999; overflow: hidden; margin-bottom: 1px; }
.prop { display: flex; border-bottom: 1px solid #a9a9a9; }
.grey { background: #bfbfbf; color: #fff; font-weight: 700; }
.peach { background: #fff0dd; }
.light { background: #ffffdc; }
.deep { background: #ffffbf; }
.pname { width: 150px; border-right: 1px solid #a9a9a9; padding: 1px 0 0 25px; position: relative; display: flex; align-items: center; }
.group .pname { border: 0; padding-left: 29px; }
.pname i { position: absolute; left: 7px; }
.group .pname i { left: 8px; top: 5px; }
.bold { font-weight: 700; }
.pval { display: flex; align-items: center; padding: 1px 0 0 5px; letter-spacing: -.04px; }
.cb { width: 13px; height: 13px; margin-left: 2px; border-radius: 2.500px; background: linear-gradient(#35a3fb, #0d85fb); }
.fa { font-weight: 600; width: 25px; padding-left: 3.500px; }
.ptr { margin: 0 14px 0 4px; }
.resbar { height: 47px; flex: none; display: flex; align-items: center; background: linear-gradient(#efefef, #cbcbcb); padding: 0 13px 0 10px; }
.resbar svg + svg { margin-left: 23px; }
.rf { width: 197px; margin-left: auto; }
.resources { height: 220px; display: flex; }
.pane { flex: 1; background: #fff; border: 1px solid #a6a6a6; padding: 2px 0 0 25px; }
.split { width: 7px; background: #ececec; display: flex; align-items: center; justify-content: center; }
.split i { width: 5px; height: 5px; border: 1px solid #aaa; border-radius: 50%; background: #fff; }
.tabs { flex: 1; display: flex; }
.strip { flex: 1; height: 11px; background: #e2e2e2; }
.tabset { display: flex; margin: 1px 1px 0 2px; height: 20px; line-height: 17px; letter-spacing: 0; border-radius: 4px; overflow: hidden; background: #fff; border: 1px solid #c6c6c6; border-width: 1px 0 1px 1px; }
.t1 { width: 106px; padding-left: 9px; border-right: 1px solid #ccc; }
.t2 { width: 87px; padding-left: 12px; }
.t3 { width: 89px; padding-left: 14px; color: #fff; background: linear-gradient(#5aaefa, #0a7bff); }
.status { height: 21px; flex: none; border-top: 1px solid #6f6f6f; background: linear-gradient(#e2e2e2, #b1b1b1); }
</style>
